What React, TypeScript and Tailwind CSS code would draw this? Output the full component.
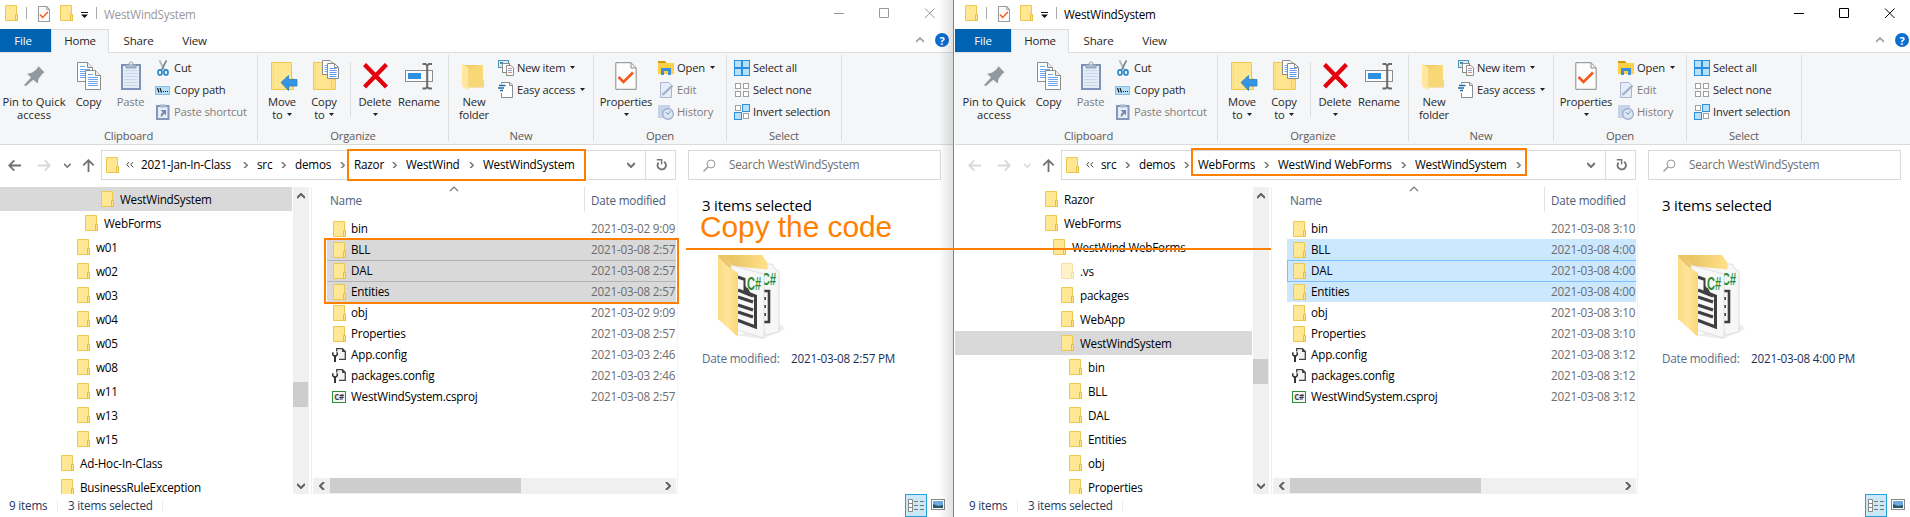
import React from "react";

const ui = "font-['Open_Sans','Noto_Sans',sans-serif]";

function Folder({ faded = false }: { faded?: boolean }) {
  return (
    <svg width="13" height="16" viewBox="0 0 13 16" className={faded ? "block shrink-0 opacity-50" : "block shrink-0"}>
      <path d="M.5.5H11.5V9.5H12.5V15.5H.5z" fill="#ffe793" stroke="#ecc751" />
      <path d="M10.5 15V9.5H12.5V15.5H10.5z" fill="#ffe48a" stroke="#e6bf45" />
    </svg>
  );
}

function PropIcon({ small = false }: { small?: boolean }) {
  return (
    <svg width={small ? 12 : 22} height={small ? 16 : 28} viewBox="0 0 22 28" preserveAspectRatio="none" className="block shrink-0">
      <path d="M.8.7H16L21.2 6V27.3H.8z" fill="#fcfcfc" stroke="#8a8a8a" strokeWidth={small ? 1.7 : 1} />
      <path d="M16 .7V6H21" fill="none" stroke="#8a8a8a" strokeWidth={small ? 1.6 : 1} />
      <path d="M3.5 15L8.5 20L18 10.5" fill="none" stroke="#f4581c" strokeWidth="2.6" />
    </svg>
  );
}

function Caret() {
  return (
    <svg width="5" height="3" viewBox="0 0 5 3" className="block shrink-0">
      <path d="M0 0H5L2.5 3z" fill="#222" />
    </svg>
  );
}

function PinIcon() {
  return (
    <svg width="21" height="21" viewBox="0 0 21 21" className="block">
      <path d="M14.500 .3L20.300 6.300L18 8.300L17.500 9L14.500 12.800L13.700 17.500L9.300 13.700L2 20L.3 19.800L.8 18.300L7 11.500L3.300 7.700L8 6.800L12.500 3.200z" fill="#8f999f" />
    </svg>
  );
}

function Page({ x, y }: { x: number; y: number }) {
  return (
    <g transform={`translate(${x} ${y})`}>
      <path d="M.5.5H10.5L15.5 5.5V19.5H.5z" fill="#fff" stroke="#8b8b8b" />
      <path d="M10.5 .5V5.5H15.5" fill="#eee" stroke="#8b8b8b" />
      <path d="M3 4.5H8M3 7.5H13M3 9.5H13M3 11.5H13M3 13.5H13M3 15.5H13" stroke="#6fa5ee" />
    </g>
  );
}

function CopyIcon() {
  return (
    <svg width="24" height="28" viewBox="0 0 24 28" className="block">
      <Page x={0} y={0} />
      <Page x={8} y={8} />
    </svg>
  );
}

function PasteIcon() {
  return (
    <svg width="20" height="29" viewBox="0 0 20 29" className="block">
      <rect x="1" y="4" width="18" height="24" fill="#e4ecf7" stroke="#7d92b8" strokeWidth="2" />
      <path d="M3.5 9.5H16.5M3.5 12.5H16.5M3.5 15.5H16.5M3.5 18.5H16.5M3.5 21.5H16.5M3.5 24.5H16.5" stroke="#cad6e8" />
      <path d="M5 3.5H8C8 0 12 0 12 3.5H15V7H5z" fill="#a7b5cd" stroke="#8595b3" strokeWidth=".8" />
      <circle cx="10" cy="2.6" r="1" fill="#fff" />
    </svg>
  );
}

function CutIcon() {
  return (
    <svg width="12" height="16" viewBox="0 0 12 16" className="block">
      <path d="M2.500 .3L7.400 10" stroke="#b3bbc0" strokeWidth="1.800" fill="none" />
      <path d="M9.500 .3L4.600 10" stroke="#6d7f8c" strokeWidth="1.500" fill="none" />
      <ellipse cx="3" cy="12.400" rx="2" ry="2.600" fill="none" stroke="#2a86c8" strokeWidth="1.700" />
      <ellipse cx="9" cy="12.400" rx="2" ry="2.600" fill="none" stroke="#2a86c8" strokeWidth="1.700" />
    </svg>
  );
}

function PathIcon() {
  return (
    <svg width="15" height="9" viewBox="0 0 15 9" className="block">
      <rect x=".5" y=".5" width="14" height="8" fill="#b5defa" stroke="#88bce0" />
      <path d="M2.5 2L4 6.5M5 2L6.5 6.5" stroke="#111" strokeWidth="1.1" />
      <path d="M8 5.5H9M10 5.5H11M12 5.5H13" stroke="#111" strokeWidth="1.2" />
    </svg>
  );
}

function PasteShortcutIcon() {
  return (
    <svg width="14" height="16" viewBox="0 0 14 16" className="block">
      <rect x="1" y="2" width="11.500" height="13" fill="#e8eef7" stroke="#8497bb" strokeWidth="2" />
      <path d="M4 0.5H10V3.5H4z" fill="#a7b5cd" />
      <path d="M4.5 6H10V11.5L8.5 9.8Q6.5 10.5 6.3 12.5H4.6Q4.5 9.5 6.8 8.2z" fill="#7388b0" />
    </svg>
  );
}

function BigFolder({ children }: { children: React.ReactNode }) {
  return (
    <svg width="27" height="31" viewBox="0 0 27 31" className="block overflow-visible">
      <path d="M.5 2.5H20.5V18.5H22.5V29.5H.5z" fill="#ffe58e" stroke="#ecc850" />
      <path d="M18.5 29V19.5H22.5V29.5H18.5z" fill="#ffdf7e" stroke="#e9c455" strokeWidth=".7" />
      <path d="M2.5 4V28.5" stroke="#f6da83" />
      {children}
    </svg>
  );
}

function MoveIcon() {
  return (
    <BigFolder>
      <path d="M10 22.5L17.5 15.5V19.5H26V26H17.5V30.5z" fill="#3694e2" stroke="#2380cc" strokeWidth=".8" />
    </BigFolder>
  );
}

function CopyToIcon() {
  return (
    <BigFolder>
      <g transform="translate(9 0)">
        <path d="M.5.5H8L11.5 4V14.5H.5z" fill="#fff" stroke="#8b8b8b" />
        <path d="M2.5 5.5H6M2.5 7.5H6M2.5 9.5H6M2.5 11.5H6" stroke="#74a8ec" />
        <path d="M5.5 3.5H12.5L16.5 7.5V18.5H5.5z" fill="#fff" stroke="#8b8b8b" />
        <path d="M12.5 3.5V7.5H16.5" fill="none" stroke="#8b8b8b" />
        <path d="M7.5 8.5H14.5M7.5 10.5H14.5M7.5 12.5H14.5M7.5 14.5H14.5M7.5 16.5H14.5" stroke="#5b97ea" />
      </g>
    </BigFolder>
  );
}

function DeleteIcon() {
  return (
    <svg width="25" height="26" viewBox="0 0 25 26" className="block">
      <path d="M1.5 1.5L23.5 24M23.5 1.5L1.5 24" stroke="#e3000f" strokeWidth="4.400" />
    </svg>
  );
}

function RenameIcon() {
  return (
    <svg width="28" height="27" viewBox="0 0 28 27" className="block">
      <rect x=".5" y="7.5" width="27" height="11" fill="#fafafa" stroke="#8b8b8b" />
      <rect x="3" y="10" width="13" height="6" fill="#2b90e2" />
      <path d="M17.5 1H20.5L22.2 2.5L24 1H27M22.2 2V24M17.5 25.5H20.5L22.2 24L24 25.5H27" fill="none" stroke="#6b6b6b" strokeWidth="2" />
    </svg>
  );
}

function NewFolderIcon() {
  return (
    <svg width="22" height="28" viewBox="0 0 22 28" className="block">
      <path d="M1 2H21V17H22V24.5H6z" fill="#f3cf6c" />
      <path d="M0 1L6.5 5V27.5L0 23.5z" fill="#ffe7a0" />
      <path d="M6.5 6.5L16 2H21V17H22V24H6.5z" fill="#f8d777" />
    </svg>
  );
}

function NewItemIcon() {
  return (
    <svg width="16" height="16" viewBox="0 0 16 16" className="block">
      <rect x=".5" y=".5" width="10" height="7" fill="#d7ecf7" stroke="#4b94b8" />
      <path d="M2 3H5" stroke="#3b8fc0" strokeWidth="2" />
      <rect x="4.5" y="3.5" width="7" height="9" fill="#fff" stroke="#8b8b8b" />
      <path d="M8.500 5.500H13L15.500 8V15.500H8.500z" fill="#fff" stroke="#8b8b8b" />
      <path d="M10 8.500H14M10 12.500H14" stroke="#dd8a85" />
      <path d="M10 10.500H14" stroke="#6fa5ee" />
    </svg>
  );
}

function EasyIcon() {
  return (
    <svg width="16" height="16" viewBox="0 0 16 16" className="block">
      <path d="M3.500.5H12L14.500 3V15.500H3.500z" fill="#fff" stroke="#8b8b8b" />
      <path d="M11.500.5V3.500H14.500" fill="none" stroke="#8b8b8b" />
      <path d="M1.500 3.500H7M0 6.500H6M2.500 9.500H5" stroke="#fff" strokeWidth="3" />
      <path d="M1 3.500H7.500M0 6H6M2 8.500H5" stroke="#1d67a8" strokeWidth="1.3" />
    </svg>
  );
}

function OpenIcon() {
  return (
    <svg width="16" height="14" viewBox="0 0 16 14" className="block">
      <path d="M0 0H7L8.500 2H0z" fill="#d89a00" />
      <path d="M0 2H16V13H0z" fill="#ffcf48" />
      <path d="M3 14V7H13V14H10V10H6V14z" fill="#3a8fd6" />
    </svg>
  );
}

function EditIcon() {
  return (
    <svg width="16" height="16" viewBox="0 0 16 16" className="block">
      <path d="M2.500.5H11L13.500 3.500V15.500H2.500z" fill="#e6edf8" stroke="#a9b8d3" />
      <path d="M4.500 13L14.500 3.500" stroke="#9fb1cf" strokeWidth="2.400" />
    </svg>
  );
}

function HistoryIcon() {
  return (
    <svg width="16" height="16" viewBox="0 0 16 16" className="block">
      <rect x="0" y="1" width="12" height="13" fill="#c6d2e6" />
      <circle cx="10" cy="10" r="5.300" fill="#dfe8f5" stroke="#9fb0ce" strokeWidth="1.400" />
      <path d="M7.500 8L10 10.500L12.500 7" fill="none" stroke="#7f93b8" />
    </svg>
  );
}

function SelectIcon({ kind }: { kind: "all" | "none" | "invert" }) {
  const cells = [
    [0, 0, kind === "all"],
    [8, 0, kind !== "none"],
    [0, 8, kind !== "none"],
    [8, 8, kind === "all"],
  ] as [number, number, boolean][];
  return (
    <svg width="16" height="16" viewBox="0 0 16 16" className="block">
      {cells.map(([x, y, on]) =>
        on ? (
          <rect key={`${x}${y}`} x={x + 0.5} y={y + 0.5} width="7" height="7" fill="#b7e0fb" stroke="#2b8fdb" />
        ) : (
          <rect key={`${x}${y}`} x={x + 1.5} y={y + 1.5} width="5" height="5" fill="#fff" stroke="#a0a0a0" />
        )
      )}
    </svg>
  );
}

function Chevron({ dir, className, size = 6, sw = 1.8 }: { dir: "up" | "down" | "left" | "right"; className: string; size?: number; sw?: number }) {
  const d = { up: "M0 5L4 1L8 5", down: "M0 1L4 5L8 1", left: "M5 0L1 4L5 8", right: "M1 0L5 4L1 8" }[dir];
  const vertical = dir === "up" || dir === "down";
  return (
    <svg
      width={vertical ? (size * 4) / 3 : size}
      height={vertical ? size : (size * 4) / 3}
      viewBox={vertical ? "0 0 8 6" : "0 0 6 8"}
      className={"block shrink-0 " + className}
    >
      <path d={d} fill="none" stroke="currentColor" strokeWidth={sw} />
    </svg>
  );
}

function Arrow({ className, turn }: { className: string; turn?: "right" | "up" }) {
  const rotate = turn === "right" ? "rotate(180 6.5 6.5)" : turn === "up" ? "rotate(90 6.5 6.5)" : undefined;
  return (
    <svg width="13" height="13" viewBox="0 0 13 13" className={"block shrink-0 " + className}>
      <path transform={rotate} d="M13 6.500H1.500M6.300 1.300L1.200 6.500L6.300 11.700" fill="none" stroke="currentColor" strokeWidth="1.800" />
    </svg>
  );
}

function ConfigIcon() {
  return (
    <svg width="14" height="14" viewBox="0 0 14 14" className="block shrink-0">
      <path d="M4.700 3.500V.7H10.500L13.300 3.500V11.300H7" fill="#f3f3f3" stroke="#444" strokeWidth="1.300" />
      <path d="M10 0V4H14z" fill="#444" />
      <path d="M0 4.500V7L2 9V14H4V9L6 7V4.500L4.500 4V6.500L3 7.300L1.500 6.500V4z" fill="#333" />
    </svg>
  );
}

function CsprojIcon() {
  return (
    <span className="flex h-3 w-3.5 shrink-0 items-center justify-center border border-[#2f8f3a] bg-[#f4f4f4] text-[8px] leading-none font-bold tracking-[-0.5px] text-[#444]">
      C#
    </span>
  );
}

function FolderStack() {
  return (
    <svg width="72" height="88" viewBox="0 0 72 88" className="block">
      <defs>
        <linearGradient id="flap" x1="0" x2="1" y1="0" y2="0">
          <stop offset="0" stopColor="#fbdc83" />
          <stop offset=".5" stopColor="#ffe59a" />
          <stop offset="1" stopColor="#f9d878" />
        </linearGradient>
        <linearGradient id="back" x1="0" x2="1" y1="0" y2="0">
          <stop offset="0" stopColor="#e8c363" />
          <stop offset="1" stopColor="#ffe08a" />
        </linearGradient>
      </defs>
      <path d="M20 80L66 70L69 74L46 84z" fill="#ededed" />
      <path d="M2 0H46L52 9V30H12z" fill="url(#back)" />
      <path d="M17 11L56 9L60 15L63 16V77L50 80L20 40z" fill="#f7f7f7" stroke="#d5d5d5" strokeWidth=".8" />
      <path d="M12 0H46L51.500 9.500V14.500L17 11z" fill="url(#back)" />
      <path d="M47 36H53V67H47" fill="none" stroke="#3f3f3f" strokeWidth="2.600" />
      <path d="M46 43.500H50M46 51.500H50M46 59.500H50" stroke="#3f3f3f" strokeWidth="3" />
      <text x="45.500" y="30" fontSize="16" fontWeight="700" fill="#2c8c33" fontFamily="Liberation Sans" textLength="14.500" lengthAdjust="spacingAndGlyphs">C#</text>
      <path d="M15 10L48 19V83L18 74z" fill="#f8f8f8" stroke="#dadada" strokeWidth=".8" />
      <path d="M22 22L29 24.500V37L39.500 41V72L21 65" fill="none" stroke="#3f3f3f" strokeWidth="3" />
      <path d="M22 35L37 41M22 42L37 47M22 50L37 55M22 57L37 62" stroke="#3f3f3f" strokeWidth="3.400" />
      <path d="M30 33L34 40" stroke="#3f3f3f" strokeWidth="3" />
      <path d="M29.500 20H45.500V37H36L29.500 31z" fill="#f8f8f8" />
      <text x="31" y="35" fontSize="19" fontWeight="700" fill="#2c8c33" fontFamily="Liberation Sans" textLength="14" lengthAdjust="spacingAndGlyphs">C#</text>
      <path d="M2 1L11 11L22 18V82L2 64z" fill="url(#flap)" />
    </svg>
  );
}

function BigButton({ icon, iconBox, label, second, caret, className, muted }: {
  icon: React.ReactNode; iconBox: string; label: string; second?: string; caret?: boolean; className: string; muted?: boolean;
}) {
  return (
    <div className={"flex shrink-0 flex-col items-center " + className}>
      <div className={"flex h-10 w-full items-start justify-center " + iconBox}>{icon}</div>
      <div className={"flex h-[13px] items-center whitespace-nowrap " + (muted ? "text-[#7a7a7a]" : "")}>{label}</div>
      <div className="flex h-[13px] items-center gap-1 whitespace-nowrap">
        {second}
        {caret && <Caret />}
      </div>
    </div>
  );
}

function SmallButton({ icon, label, caret, muted }: { icon: React.ReactNode; label: string; caret?: boolean; muted?: boolean }) {
  return (
    <div className="flex h-[22px] items-center">
      <span className="flex w-[19px] shrink-0 justify-start">{icon}</span>
      <span className={"-mt-px whitespace-nowrap " + (muted ? "text-[#7d7d7d]" : "")}>{label}</span>
      {caret && <span className="-mt-px ml-[5px]"><Caret /></span>}
    </div>
  );
}

function Group({ label, className, children }: { label: string; className: string; children: React.ReactNode }) {
  return (
    <div className={"flex h-[86px] shrink-0 flex-col border-r border-[#dcdddf] " + className}>
      <div className="flex h-[74px]">{children}</div>
      <div className="flex h-3 items-center justify-center text-[#5a5a5a]">{label}</div>
    </div>
  );
}

function Ribbon() {
  return (
    <div className="flex h-[92px] shrink-0 border-b border-[#d9dadb] bg-[#f5f6f7] pt-[2px] text-[11.2px] leading-[13px] tracking-[-0.17px] text-[#262626]">
      <Group label="Clipboard" className="w-[263px] pl-[5px]">
        <BigButton className="w-[68px] tracking-[0.05px]" iconBox="pt-[11px]" icon={<PinIcon />} label="Pin to Quick" second="access" />
        <BigButton className="w-[41px]" iconBox="pt-[7px]" icon={<CopyIcon />} label="Copy" />
        <BigButton className="ml-[1px] w-[41px]" iconBox="pt-[6px]" icon={<PasteIcon />} label="Paste" muted />
        <div className="ml-[4px] flex flex-col pt-[2px]">
          <SmallButton icon={<span className="pl-[2px]"><CutIcon /></span>} label="Cut" />
          <SmallButton icon={<PathIcon />} label="Copy path" />
          <SmallButton icon={<span className="pl-px"><PasteShortcutIcon /></span>} label="Paste shortcut" muted />
        </div>
      </Group>
      <Group label="Organize" className="w-[191px]">
        <BigButton className="ml-[3px] w-[42px]" iconBox="pl-[5px] pt-[5px]" icon={<MoveIcon />} label="Move" second="to" caret />
        <BigButton className="w-[42px]" iconBox="pl-[5px] pt-[5px]" icon={<CopyToIcon />} label="Copy" second="to" caret />
        <div className="mt-[7px] ml-[5px] h-[55px] w-px bg-[#dcdddf]" />
        <BigButton className="ml-[3px] w-[42px]" iconBox="pt-[8px]" icon={<DeleteIcon />} label="Delete" caret />
        <BigButton className="ml-[2px] w-[42px]" iconBox="pt-[8px]" icon={<RenameIcon />} label="Rename" />
      </Group>
      <Group label="New" className="w-[145px]">
        <BigButton className="ml-[4px] w-[42px]" iconBox="pt-[8px] pr-0.5" icon={<NewFolderIcon />} label="New" second="folder" />
        <div className="ml-[3px] flex flex-col pt-[2px]">
          <SmallButton icon={<NewItemIcon />} label="New item" caret />
          <SmallButton icon={<EasyIcon />} label="Easy access" caret />
        </div>
      </Group>
      <Group label="Open" className="w-[133px]">
        <BigButton className="ml-[4px] w-[56px]" iconBox="pt-[7px]" icon={<PropIcon />} label="Properties" caret />
        <div className="ml-[4px] flex flex-col pt-[2px]">
          <SmallButton icon={<OpenIcon />} label="Open" caret />
          <SmallButton icon={<EditIcon />} label="Edit" muted />
          <SmallButton icon={<HistoryIcon />} label="History" muted />
        </div>
      </Group>
      <Group label="Select" className="w-[115px]">
        <div className="ml-[7px] flex flex-col pt-[2px]">
          <SmallButton icon={<SelectIcon kind="all" />} label="Select all" />
          <SmallButton icon={<SelectIcon kind="none" />} label="Select none" />
          <SmallButton icon={<SelectIcon kind="invert" />} label="Invert selection" />
        </div>
      </Group>
    </div>
  );
}

type Crumb = { text: string; width: string; chevron?: boolean };
type TreeRow = { text: string; indent: string; selected?: boolean; faded?: boolean };
type FileRow = { name: string; date: string; kind: "folder" | "config" | "csproj"; row: string };

type WindowProps = {
  active: boolean;
  crumbs: Crumb[];
  tree: TreeRow[];
  thumb: string;
  files: FileRow[];
  modified: string;
};

function ExplorerWindow({ active, crumbs, tree, thumb, files, modified }: WindowProps) {
  const dim = active ? "text-[#d9d9d9]" : "text-[#707070]";
  return (
    <div className="flex h-[517px] w-[960px] shrink-0 flex-col bg-white text-[11.7px] tracking-[-0.2px] text-black">
      <div className={"flex h-[29px] shrink-0 items-start " + (active ? "text-black" : "text-[#999]")}>
        <div className="mt-[5px] ml-[10px]"><Folder /></div>
        <div className="mt-[7px] ml-[8px] h-3 w-px bg-[#aaa]" />
        <div className="mt-[6px] ml-[11px]"><PropIcon small /></div>
        <div className="mt-[5px] ml-[10px]"><Folder /></div>
        <svg width="7" height="6" viewBox="0 0 7 6" className="mt-[12px] ml-[8px] block">
          <path d="M0 .5H7" stroke="#111" />
          <path d="M0 2.500H7L3.500 6z" fill="#111" />
        </svg>
        <div className="mt-[7px] ml-[8px] h-3 w-px bg-[#aaa]" />
        <div className="ml-[7px] h-[29px] w-[200px] leading-[28px]">WestWindSystem</div>
        <svg width="101" height="11" viewBox="0 0 101 11" className="mt-[8px] ml-[530px] block">
          <path d="M0 5.500H10M45.500.5H54.500V9.500H45.500zM91 .5L100.500 10M100.500.5L91 10" fill="none" stroke="currentColor" />
        </svg>
      </div>
      <div className="flex h-6 shrink-0 items-start border-b border-[#dcdddf] text-[11.5px] text-[#262626]">
        <div className="h-[23px] w-[56px] bg-[#0063b1] text-center leading-[24px] text-white">File</div>
        <div className="h-6 w-[58px] border border-b-0 border-[#dcdddf] bg-[#f5f6f7] text-center leading-[22px]">Home</div>
        <div className="w-[59px] text-center leading-[24px]">Share</div>
        <div className="w-[53px] text-center leading-[24px]">View</div>
        <Chevron dir="up" className="mt-[8px] ml-[695px] text-[#999]" sw={1.6} />
        <div className="mt-[4px] ml-[11px] flex h-3.5 w-3.5 items-center justify-center rounded-full bg-[#0a6ed1] text-[11px] leading-none font-bold text-white">?</div>
      </div>
      <Ribbon />
      <div className="flex h-[42px] shrink-0 items-start pt-[5px]">
        <div className="flex h-[30px] w-[106px] items-center">
          <Arrow className={"ml-[13px] " + dim} />
          <Arrow turn="right" className="ml-[17px] text-[#d9d9d9]" />
          <Chevron dir="down" className={"ml-[13px] " + dim} size={5} />
          <Arrow turn="up" className="ml-[11px] text-[#707070]" />
        </div>
        <div className="flex h-[30px] w-[575px] items-center border border-[#d9d9d9]">
          <div className="flex w-[525px] shrink-0 items-center">
            <div className="ml-1"><Folder /></div>
            <div className="ml-[7px] flex w-[15px] items-center text-[#444]">
              <Chevron dir="left" size={4} sw={1.5} className="" />
              <Chevron dir="left" size={4} sw={1.5} className="" />
            </div>
            {crumbs.map((c) => (
              <div key={c.text} className={"flex shrink-0 items-center justify-between whitespace-nowrap " + c.width}>
                <span>{c.text}</span>
                {c.chevron !== false && <Chevron dir="right" size={5} className="mr-[9px] text-[#777]" />}
              </div>
            ))}
          </div>
          <Chevron dir="down" className="text-[#777]" sw={2.2} />
          <div className="ml-[10px] h-full w-px bg-[#d9d9d9]" />
          <svg width="11" height="12" viewBox="0 0 11 12" className="ml-[10px] block">
            <path d="M8 2.700A4.200 4.200 0 1 1 2.500 3.600" fill="none" stroke="#777" strokeWidth="1.900" />
            <path d="M.8 .8H5.600V5.600" fill="none" stroke="#777" strokeWidth="1.500" />
          </svg>
        </div>
        <div className="ml-3 flex h-[30px] w-[253px] items-center border border-[#d9d9d9] text-[#6d6d6d]">
          <svg width="13" height="13" viewBox="0 0 13 13" className="ml-[14px] block">
            <circle cx="8" cy="5" r="4" fill="none" stroke="#999" />
            <path d="M5 8L.5 12.500" stroke="#999" strokeWidth="1.400" />
          </svg>
          <span className="ml-[13px]">Search WestWindSystem</span>
        </div>
      </div>
      <div className="flex h-[307px] shrink-0">
        <div className="h-[307px] w-[297px] shrink-0 overflow-hidden">
          {tree.map((r, i) => (
            <div key={i} className={"flex h-6 items-center " + r.indent + (r.selected ? " bg-[#d9d9d9]" : "")}>
              <Folder faded={r.faded} />
              <span className="ml-1.5 leading-6">{r.text}</span>
            </div>
          ))}
        </div>
        <div className="ml-px flex w-4 shrink-0 flex-col items-center bg-[#f0f0f0] text-[#606060]">
          <div className="flex h-[17px] items-center"><Chevron dir="up" className="" sw={2} /></div>
          <div className={"mr-px h-[25px] w-[15px] bg-[#cdcdcd] " + thumb} />
          <div className="mt-auto flex h-[17px] items-center"><Chevron dir="down" className="" sw={2} /></div>
        </div>
        <div className="ml-[2px] w-px bg-[#f0f0f0]" />
        <div className="ml-px flex w-[363px] shrink-0 flex-col">
          <div className="flex h-[31px] text-[#4c607a]">
            <div className="w-[124px] pl-[17px] leading-[26px]">Name</div>
            <Chevron dir="up" className="mt-[-1px] w-[34px] text-[#777]" size={6} sw={1.2} />
            <div className="ml-[113px] h-[25px] w-px bg-[#e2e2e2]" />
            <div className="pl-[6px] leading-[26px] whitespace-nowrap">Date modified</div>
          </div>
          {files.map((f) => (
            <div key={f.name} className={"ml-[14px] flex h-[21px] shrink-0 items-center overflow-hidden " + f.row}>
              <div className="flex w-[24px] shrink-0 items-center pl-[5px]">
                {f.kind === "folder" ? <span className="pl-px"><Folder /></span> : f.kind === "config" ? <ConfigIcon /> : <CsprojIcon />}
              </div>
              <div className="w-[240px] shrink-0 leading-[21px]">{f.name}</div>
              <div className="shrink-0 leading-[21px] whitespace-nowrap text-[#6d6d6d]">{f.date}</div>
            </div>
          ))}
          <div className="mt-auto flex h-4 items-start bg-[#f0f0f0] text-[#606060]">
            <div className="flex h-4 w-[17px] items-center justify-center"><Chevron dir="left" className="" sw={2} /></div>
            <div className="h-[15px] w-[191px] bg-[#cdcdcd]" />
            <div className="ml-auto flex h-4 w-[17px] items-center justify-center"><Chevron dir="right" className="" sw={2} /></div>
          </div>
        </div>
        <div className="ml-px w-px bg-[#f3f3f3]" />
        <div className="flex flex-col pl-[24px]">
          <div className="mt-[8px] text-[15px] leading-[21px] tracking-[-0.2px]">3 items selected</div>
          <div className="mt-[39px] ml-[14px]"><FolderStack /></div>
          <div className="mt-[6px] flex leading-[18px] text-[#5a6b84]">
            <span className="w-[89px]">Date modified:</span>
            <span className="text-[#1e2f55]">{modified}</span>
          </div>
        </div>
      </div>
      <div className="flex h-[23px] shrink-0 items-center text-[#1e395b]">
        <div className="ml-[14px] w-12">9 items</div>
        <div className="h-3 w-px bg-[#ededed]" />
        <div className="ml-[10px] w-[94px] whitespace-nowrap">3 items selected</div>
        <div className="h-3 w-px bg-[#ededed]" />
        <div className="ml-[742px] flex h-[23px] w-[22px] items-center justify-center border border-[#26a0da] bg-[#cbe8f6]">
          <svg width="16" height="13" viewBox="0 0 16 13" className="block">
            <path d="M.5.5H4.500V12.500H.5zM.5 4.500H4.500M.5 8.500H4.500" fill="#fff" stroke="#888" />
            <path d="M6 2.500H10M12 2.500H16M6 6.500H10M12 6.500H16M6 10.500H10M12 10.500H16" stroke="#777" />
          </svg>
        </div>
        <svg width="14" height="11" viewBox="0 0 14 11" className="mb-[2px] ml-1 block">
          <rect x=".5" y=".5" width="13" height="10" fill="#fff" stroke="#888" />
          <path d="M2 2H12V9H2z" fill="#6fa9e0" />
          <path d="M2 5L7 7L12 6V9H2z" fill="#2c5a62" />
        </svg>
      </div>
    </div>
  );
}

const leftCrumbs: Crumb[] = [
  { text: "2021-Jan-In-Class", width: "w-[116px]" },
  { text: "src", width: "w-[38px]" },
  { text: "demos", width: "w-[59px]" },
  { text: "Razor", width: "w-[52px]" },
  { text: "WestWind", width: "w-[77px]" },
  { text: "WestWindSystem", width: "w-[115px]", chevron: false },
];
const rightCrumbs: Crumb[] = [
  { text: "src", width: "w-[38px]" },
  { text: "demos", width: "w-[59px]" },
  { text: "WebForms", width: "w-[80px]" },
  { text: "WestWind WebForms", width: "w-[137px]" },
  { text: "WestWindSystem", width: "w-[115px]" },
];

const leftTree: TreeRow[] = [
  { text: "WestWindSystem", indent: "pl-[106px]", selected: true },
  { text: "WebForms", indent: "pl-[90px]" },
  ...["w01", "w02", "w03", "w04", "w05", "w08", "w11", "w13", "w15"].map((text) => ({ text, indent: "pl-[82px]" })),
  { text: "Ad-Hoc-In-Class", indent: "pl-[66px]" },
  { text: "BusinessRuleException", indent: "pl-[66px]" },
];
const rightTree: TreeRow[] = [
  { text: "Razor", indent: "pl-[90px]" },
  { text: "WebForms", indent: "pl-[90px]" },
  { text: "WestWind WebForms", indent: "pl-[98px]" },
  { text: ".vs", indent: "pl-[106px]", faded: true },
  { text: "packages", indent: "pl-[106px]" },
  { text: "WebApp", indent: "pl-[106px]" },
  { text: "WestWindSystem", indent: "pl-[106px]", selected: true },
  ...["bin", "BLL", "DAL", "Entities", "obj", "Properties"].map((text) => ({ text, indent: "pl-[114px]" })),
];

const entries: { name: string; kind: FileRow["kind"] }[] = [
  { name: "bin", kind: "folder" },
  { name: "BLL", kind: "folder" },
  { name: "DAL", kind: "folder" },
  { name: "Entities", kind: "folder" },
  { name: "obj", kind: "folder" },
  { name: "Properties", kind: "folder" },
  { name: "App.config", kind: "config" },
  { name: "packages.config", kind: "config" },
  { name: "WestWindSystem.csproj", kind: "csproj" },
];

function listing(dates: string[], rows: string[]): FileRow[] {
  return entries.map((e, i) => ({ ...e, date: dates[i], row: rows[i] ?? "" }));
}

const leftFiles = listing(
  ["2021-03-02 9:09", "2021-03-08 2:57", "2021-03-08 2:57", "2021-03-08 2:57", "2021-03-02 9:09", "2021-03-08 2:57", "2021-03-03 2:46", "2021-03-03 2:46", "2021-03-08 2:57"],
  ["", "bg-[#d9d9d9]", "bg-[#d9d9d9] shadow-[inset_0_1px_#b3b3b3]", "bg-[#d9d9d9] shadow-[inset_0_1px_#b3b3b3]"]
);
const rightFiles = listing(
  ["2021-03-08 3:10", "2021-03-08 4:00", "2021-03-08 4:00", "2021-03-08 4:00", "2021-03-08 3:10", "2021-03-08 3:10", "2021-03-08 3:12", "2021-03-08 3:12", "2021-03-08 3:12"],
  ["", "bg-[#cce8ff]", "bg-[#cce8ff] shadow-[inset_1px_1px_#7abfff]", "bg-[#cce8ff] shadow-[inset_0_1px_#7abfff]"]
);

export default function App() {
  return (
    <div className={"relative flex h-[517px] w-[1910px] overflow-hidden bg-white " + ui}>
      <div className="relative w-[953px] shrink-0 overflow-hidden">
        <div className="-ml-[5px]">
          <ExplorerWindow active={false} crumbs={leftCrumbs} tree={leftTree} thumb="mt-[178px]" files={leftFiles} modified="2021-03-08 2:57 PM" />
        </div>
        <div className="absolute inset-y-0 right-0 w-[14px] bg-linear-to-r from-transparent to-black/12" />
      </div>
      <div className="w-px shrink-0 bg-[#858585]" />
      <div className="ml-px w-[955px] shrink-0 overflow-hidden">
        <ExplorerWindow active crumbs={rightCrumbs} tree={rightTree} thumb="mt-[155px]" files={rightFiles} modified="2021-03-08 4:00 PM" />
      </div>
      <div className="absolute top-[149px] left-[347px] h-8 w-[239px] border-2 border-[#ff8000]" />
      <div className="absolute top-[148px] left-[1191px] h-7 w-[336px] border-2 border-[#ff8000]" />
      <div className="absolute top-[238px] left-[324px] h-[66px] w-[355px] border-2 border-[#ff8000]" />
      <div className="absolute top-[248px] left-[686px] h-0.5 w-[585px] bg-[#ff8000]" />
      <div className="absolute top-[209px] left-[700px] font-['Liberation_Sans',sans-serif] text-[29.8px] leading-9 whitespace-nowrap text-[#ff8000]">Copy the code</div>
    </div>
  );
}
